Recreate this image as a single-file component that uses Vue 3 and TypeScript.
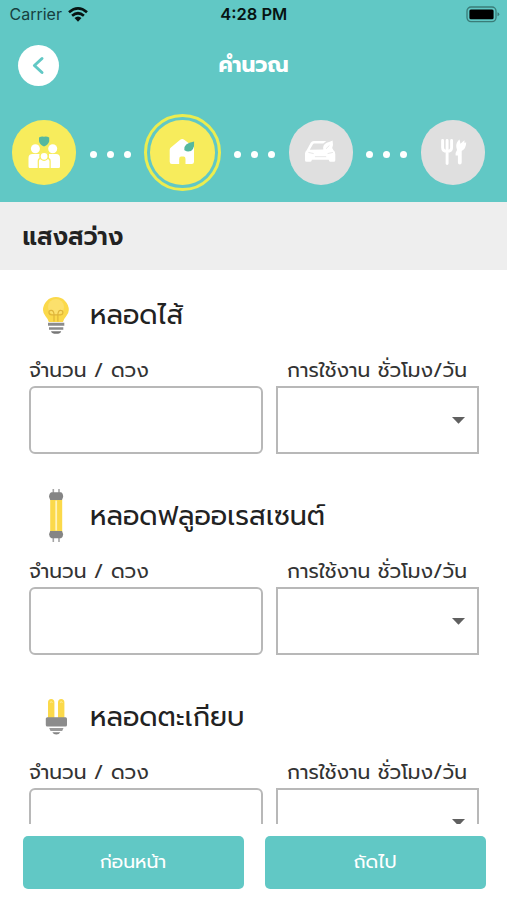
<script setup lang="ts">
type LampKind = 'bulb' | 'tube' | 'compact'

interface Lamp {
  kind: LampKind
  name: string
}

const lamps: Lamp[] = [
  { kind: 'bulb', name: 'หลอดไส้' },
  { kind: 'tube', name: 'หลอดฟลูออเรสเซนต์' },
  { kind: 'compact', name: 'หลอดตะเกียบ' },
]
</script>

<template>
  <main class="screen">
    <header class="header">
      <div class="status">
        <div class="carrier">
          <span>Carrier</span>
          <svg class="wifi" width="20" height="15" viewBox="0 0 20 15">
            <g fill="none" stroke="#071413" stroke-width="2.7">
              <path d="M1 5.3Q10-2.4 19 5.3" />
              <path d="M4.1 8.7Q10 3.8 15.9 8.7" />
            </g>
            <path d="M6.5 11Q10 8 13.5 11L10 14.8Z" fill="#071413" />
          </svg>
        </div>
        <span class="time">4:28 PM</span>
        <svg class="battery" width="34" height="17" viewBox="0 0 34 17">
          <rect x="1" y="1" width="29" height="14.6" rx="4" fill="none" stroke="#3a7c78" stroke-width="1.3" />
          <rect x="3.4" y="3.4" width="24.2" height="9.8" rx="1.5" fill="#000" />
          <path d="M31.5 6.3q1.8.6 1.8 2t-1.8 2z" fill="#3a7c78" />
        </svg>
      </div>

      <div class="titlebar">
        <button class="back" aria-label="ย้อนกลับ">
          <svg width="41" height="41" viewBox="0 0 41 41">
            <path d="M24 13.5l-7.6 7 7.6 7" fill="none" stroke="#61c8c5" stroke-width="3" stroke-linecap="round" stroke-linejoin="round" />
          </svg>
        </button>
        <h1>คำนวณ</h1>
      </div>

      <nav class="steps">
        <div class="step done">
          <svg width="64" height="64" viewBox="0 0 64 64">
            <path d="M27 17.500q2.600-1.700 5-.8 2.600-.9 5.200.8v3.800q-.6 3.200-5.200 5.200-4.400-2-5-5.200z" fill="#55b89f" />
            <g fill="#fff">
              <circle cx="23.400" cy="28.800" r="4.500" />
              <circle cx="40.700" cy="28.800" r="4.500" />
              <path d="M16.500 46.500V38q0-4 4-4h7v14h-9.500q-1.500 0-1.500-1.500zM48 46.500V38q0-4-4-4h-7v14h9.500q1.500 0 1.500-1.500z" />
            </g>
            <g fill="#fff" stroke="#f7ec5c" stroke-width="1.200">
              <path d="M26.300 48.500v-7.500q0-2.700 3-2.700h5.800q3 0 3 2.700v7.500z" />
              <circle cx="32.100" cy="36.300" r="4" />
            </g>
          </svg>
        </div>
        <div class="dots"><i /><i /><i /></div>
        <div class="step current">
          <svg width="64" height="64" viewBox="0 0 64 64">
            <path d="M19.700 30q0-1.500 1.200-2.400l9.300-7.900q2-1.500 4 0l9.800 7.500v14.500q0 2.200-2.200 2.200H35.500v-5q0-2.300-2-2.300h-2.300q-2 0-2 2.300v5h-7.300q-2.200 0-2.200-2.200z" fill="#fff" />
            <path d="M34.300 29.800q-1-6.200 9.800-8.300.8 10-6 10-2 0-2.600-.7-.9-.2-1.200-1z" fill="#55b89f" />
          </svg>
        </div>
        <div class="dots"><i /><i /><i /></div>
        <div class="step">
          <svg width="64" height="64" viewBox="0 0 64 64">
            <path fill="#fff" fill-rule="evenodd" d="M17.800 30l3.900-7.300q1-1.700 3-1.700H37.300l-3 2.600h-9q-1 0-1.500 1L20.800 29.700l13.500-.2q-1-4.800 3.500-6.800 3-1 5.800-2.200 1 5-.4 7.500l1.100 2q2 1.500 2 4.300v6q0 1.500-1.500 1.500h-3.500q-1.500 0-1.500-2h-17q0 2-1.500 2h-3.800q-1.500 0-1.500-1.500V33.500q0-2 1.800-3.500z" />
            <path d="M19.800 32.500l4.500 1M43.500 32.500l-4.500 1M26.300 36.700h10.500M37.300 28.500l2.800-2.800" fill="none" stroke="#dfdfdf" stroke-width=".8" stroke-linecap="round" />
          </svg>
        </div>
        <div class="dots"><i /><i /><i /></div>
        <div class="step">
          <svg width="64" height="64" viewBox="0 0 64 64">
            <path d="M21.600 20.500v7q0 3.800 4.500 3.800t4.500-3.800v-7M26.100 20.500v23" fill="none" stroke="#fff" stroke-width="2.900" stroke-linecap="round" />
            <path d="M36 30q-2-5.500 1.100-9.200l1.500-1.400.8 4.400 4-3.600.1 2.800 1.700-.7q0 6.500-4.500 8.700v11.500q0 2-1.900 2t-1.900-2V35.500h-2.300q-.4-2.900 1.400-5.500z" fill="#fff" />
          </svg>
        </div>
      </nav>
    </header>

    <h2 class="section">แสงสว่าง</h2>

    <div class="list">
      <section v-for="lamp in lamps" :key="lamp.kind" class="lamp">
        <div class="lamp-head">
          <svg v-if="lamp.kind === 'bulb'" width="54" height="54" viewBox="0 0 54 54">
            <path d="M19.800 34Q19.500 31.500 16.700 28.500 14 25.500 14 22A12.900 12.900 0 0 1 39.800 22Q39.800 25.500 37 28.500 34.300 31.500 34 34z" fill="#fbd94a" />
            <circle cx="27" cy="19" r="8" fill="#fce06c" />
            <path d="M25 33.500V26q-.5-4-3-3.700t-2 2.700q.5 2 3 1.800h8.200q2.500.2 2.700-1.800.2-2.500-2-2.700-2.500-.3-3 3.700v7.500" fill="none" stroke="#dfb53a" stroke-width="1.200" />
            <path d="M19 34.800h16.300v2.900H19zM20 39.300h14.300v2.400H20z" fill="#8c8c8c" />
            <path d="M22 43.200h10.200q-.7 2.600-5 2.600t-5.200-2.600z" fill="#777" />
          </svg>
          <svg v-else-if="lamp.kind === 'tube'" width="54" height="54" viewBox="0 0 54 54">
            <path d="M24.300 0v5M30 0v5M24.300 48v5M30 48v5" stroke="#a5a5a5" stroke-width="1.600" />
            <path d="M21.200 10.500h12v33h-12z" fill="#fbd94a" />
            <path d="M27.200 11.500v30" stroke="#fff3bb" stroke-width="1.800" />
            <path d="M22.500 3.300h9.500q2 .7 2.200 4.500l-1.200 3.300H21.200L20 7.800q.3-3.800 2.500-4.500zM21.200 42h11.800l1.200 3.300q-.2 3-2.200 4H22.500q-2.200-1-2.500-4z" fill="#858585" />
          </svg>
          <svg v-else width="54" height="54" viewBox="0 0 54 54">
            <path d="M19 29V12.500q0-3.500 3.200-3.500t3.200 3.500V29zM29 29V12.500q0-3.500 3.200-3.500t3.200 3.500V29z" fill="#fbd94a" />
            <path d="M20.900 12.500q1.300-1.500 2.600 0M30.900 12.500q1.300-1.500 2.600 0" fill="none" stroke="#fff0a5" stroke-width="1" />
            <rect x="16.800" y="27.200" width="21.200" height="9.200" rx="1.500" fill="#8c8c8c" />
            <path d="M20.200 38h14.300l-1.300 3H21.500z" fill="#9a9a9a" />
            <path d="M23.300 42.200h8q-1.200 2.300-4 2.300t-4-2.300z" fill="#858585" />
          </svg>
          <h3>{{ lamp.name }}</h3>
        </div>
        <div class="fields">
          <label class="field amount">
            <span>จำนวน / ดวง</span>
            <div class="box rounded" />
          </label>
          <label class="field usage">
            <span>การใช้งาน ชั่วโมง/วัน</span>
            <div class="box select">
              <svg width="13" height="7" viewBox="0 0 13 7"><path d="M0 0h13L6.500 6.800z" fill="#606060" /></svg>
            </div>
          </label>
        </div>
      </section>
    </div>

    <footer class="actions">
      <button>ก่อนหน้า</button>
      <button>ถัดไป</button>
    </footer>
  </main>
</template>

<style>
body {
  margin: 0;
  background: #fff;
}
</style>

<style scoped>
.screen {
  display: flex;
  flex-direction: column;
  box-sizing: border-box;
  width: 507px;
  height: 900px;
  overflow: hidden;
  background: #fff;
  color: #222;
  font-family: Prompt, 'Noto Sans', sans-serif;
}

h1, h2, h3 {
  margin: 0;
}

button {
  border: 0;
  padding: 0;
  font-family: inherit;
}

svg {
  display: block;
  flex: none;
}

.header {
  flex: none;
  height: 202px;
  background: #61c8c5;
}

.status {
  display: grid;
  grid-template-columns: 1fr auto 1fr;
  align-items: center;
  height: 29px;
  padding: 0 7px 0 9.500px;
  color: #071413;
  font: 400 16px/29px Inter, sans-serif;
}

.carrier {
  display: flex;
  align-items: center;
  gap: 6px;
  color: #17403f;
}

.time {
  margin-right: 2px;
  font-size: 16.500px;
  font-weight: 600;
}

.battery {
  justify-self: end;
}

.titlebar {
  display: grid;
  grid-template-columns: 41px 1fr 41px;
  align-items: center;
  height: 41px;
  margin-top: 16px;
  padding: 0 18px;
}

.back {
  width: 41px;
  height: 41px;
  border-radius: 50%;
  background: #fff;
}

h1 {
  color: #fff;
  font-size: 21.500px;
  font-weight: 700;
  line-height: 41px;
  text-align: center;
}

.steps {
  display: flex;
  align-items: center;
  height: 77px;
  margin-top: 28px;
  padding-left: 12px;
}

.step {
  flex: none;
  width: 64.400px;
  height: 64.400px;
  border-radius: 50%;
  background: #dfdfdf;
}

.done {
  background: #f7ec5c;
}

.current {
  padding: 3.200px;
  border: 3px solid #ebed50;
  background: #f7ec5c content-box;
}

.dots {
  display: flex;
  flex: none;
  justify-content: center;
  gap: 9.800px;
  width: 67.700px;
  padding-top: 3px;
}

.dots i {
  width: 7px;
  height: 7px;
  border-radius: 50%;
  background: #fff;
}

.section {
  flex: none;
  height: 68px;
  padding-left: 22.500px;
  background: #eee;
  font-size: 24.400px;
  font-weight: 600;
  line-height: 70px;
}

.list {
  height: 554px;
  overflow: hidden;
}

.lamp {
  height: 201px;
  padding: 18px 28px 0 29px;
  box-sizing: border-box;
}

.lamp-head {
  display: flex;
  align-items: center;
  gap: 7px;
  height: 54px;
}

h3 {
  font-size: 27px;
  font-weight: 400;
  line-height: 54px;
  white-space: nowrap;
}

.fields {
  display: flex;
  gap: 13px;
  margin-top: 14px;
}

.field span {
  display: block;
  height: 30px;
  color: #333;
  font-size: 20.200px;
  font-weight: 400;
  line-height: 30px;
  white-space: nowrap;
}

.amount {
  width: 234px;
}

.usage {
  width: 203px;
}

.usage span {
  padding-left: 11px;
}

.box {
  box-sizing: border-box;
  height: 68px;
  border: 2px solid #b8b8b8;
}

.rounded {
  border-radius: 6px;
}

.select {
  display: flex;
  align-items: center;
  justify-content: flex-end;
  padding-right: 12px;
}

.actions {
  display: flex;
  gap: 21px;
  padding: 11.500px 21.500px 0 22.500px;
}

.actions button {
  flex: 1;
  height: 53.500px;
  border-radius: 5px;
  background: #61c8c5;
  color: #fff;
  font-size: 18.800px;
  font-weight: 400;
}
</style>
